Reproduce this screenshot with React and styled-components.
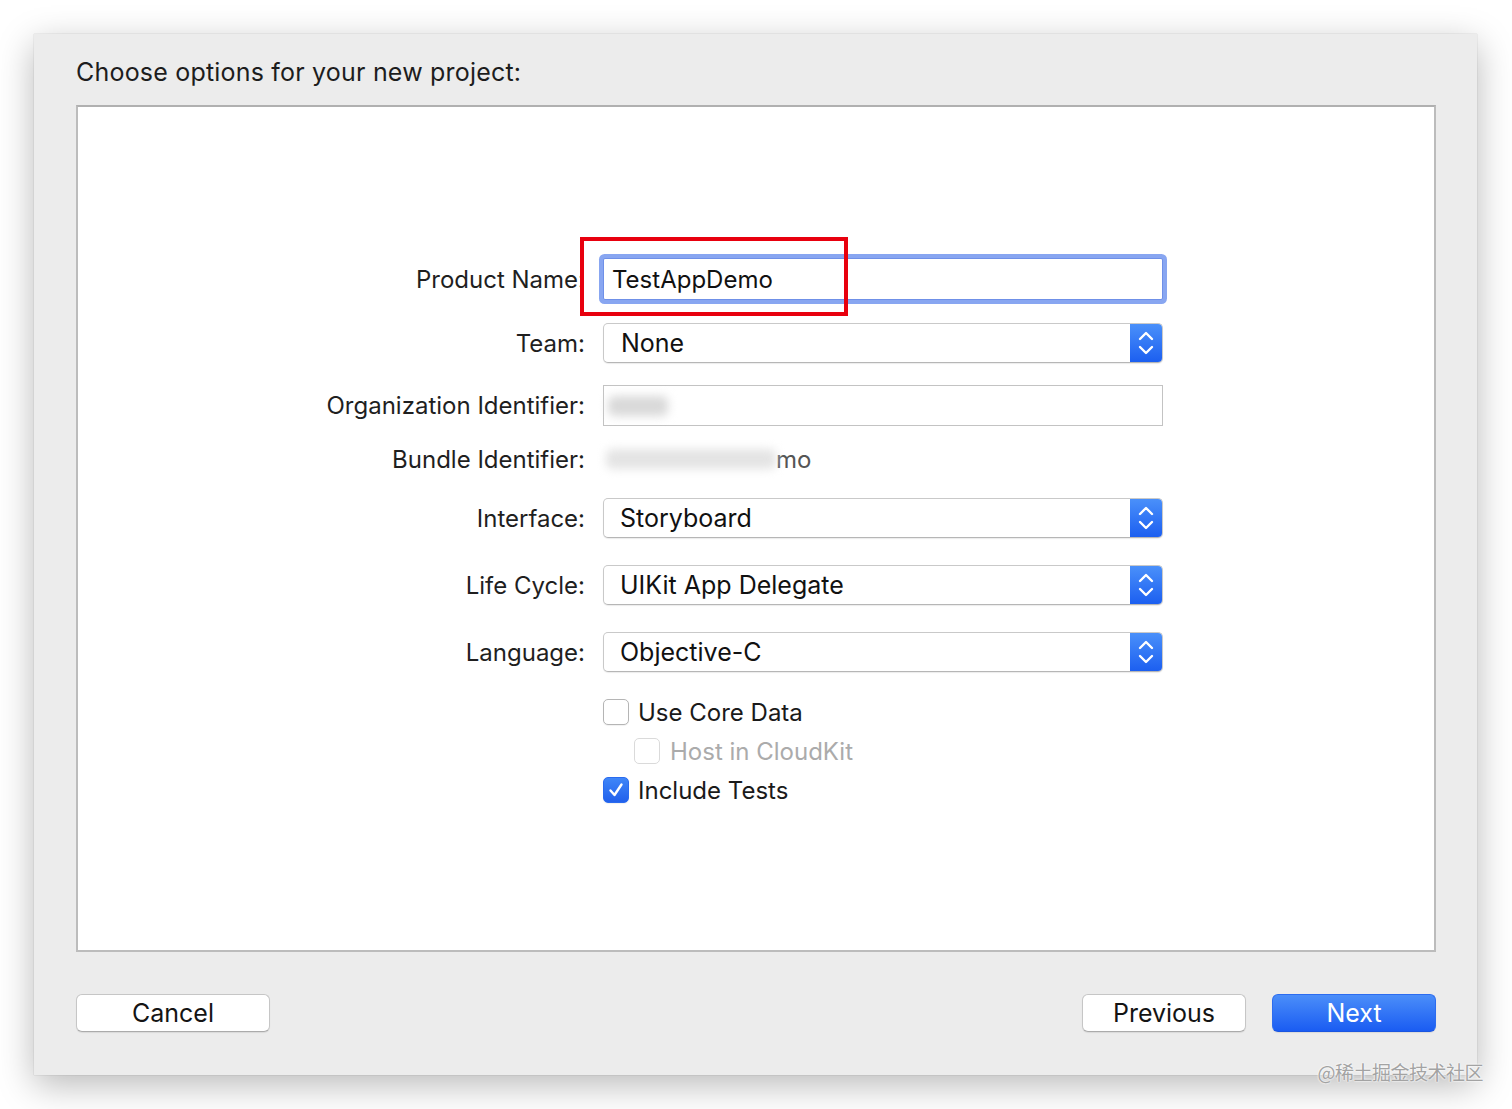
import React from "react";
import styled, { createGlobalStyle } from "styled-components";

const Global = createGlobalStyle`
  html, body { margin: 0; padding: 0; background: #ffffff; }
  body { font-family: Inter, "Noto Sans", "Liberation Sans", sans-serif; -webkit-font-smoothing: antialiased; }
  #root { width: 1512px; height: 1109px; position: relative; overflow: hidden; }
`;

const Page = styled.div`
  width: 1512px;
  height: 1109px;
  padding: 34px 0 0 34px;
  box-sizing: border-box;
  position: relative;
`;

const Window = styled.div`
  width: 1443px;
  height: 1041px;
  box-sizing: border-box;
  background: #ececec;
  box-shadow: 0 10px 34px rgba(0, 0, 0, 0.28), 0 0 1px rgba(0, 0, 0, 0.25);
  padding: 22px 41px 43px 42px;
  display: flex;
  flex-direction: column;
`;

const Title = styled.div`
  font-size: 25px;
  line-height: 32px;
  color: #1d1d1d;
  margin-bottom: 17px;
  letter-spacing: 0.2px;
`;

const ContentBox = styled.div`
  height: 847px;
  box-sizing: border-box;
  background: #ffffff;
  border: 2px solid #bcbcbc;
  border-top-color: #b0b0b0;
  padding-top: 147px;
`;

const Form = styled.div`
  display: flex;
  flex-direction: column;
`;

const Row = styled.div`
  display: grid;
  grid-template-columns: 507px 560px;
  column-gap: 18px;
  align-items: center;
  height: ${(p) => p.$h}px;
  margin-top: ${(p) => p.$mt || 0}px;
  position: relative;
`;

const Label = styled.div`
  text-align: right;
  font-size: 24px;
  color: #1f1f1f;
  white-space: nowrap;
`;

const TextField = styled.div`
  height: 42px;
  box-sizing: border-box;
  border: 1px solid #6f90e8;
  border-radius: 2px;
  box-shadow: 0 0 0 4px #88a6f1;
  background: #fff;
  display: flex;
  align-items: center;
  padding-left: 8px;
  font-size: 24px;
  color: #111;
`;

const PlainField = styled.div`
  height: 41px;
  box-sizing: border-box;
  border: 1px solid #c3c3c3;
  background: #fff;
  display: flex;
  align-items: center;
  padding-left: 4px;
`;

const Blur = styled.span`
  display: inline-block;
  width: ${(p) => p.$w}px;
  height: ${(p) => p.$h}px;
  background: ${(p) => p.$c};
  filter: blur(5px);
  border-radius: 6px;
`;

const BundleValue = styled.div`
  display: flex;
  align-items: center;
  font-size: 24px;
  color: #555;
  padding-left: 3px;
`;

const Popup = styled.div`
  height: 40px;
  box-sizing: border-box;
  border: 1px solid #c9c9c9;
  border-bottom-color: #b6b6b6;
  border-radius: 5px;
  background: #fff;
  box-shadow: 0 1px 1px rgba(0, 0, 0, 0.08);
  display: flex;
  align-items: stretch;
  overflow: hidden;
`;

const PopupText = styled.div`
  flex: 1;
  display: flex;
  align-items: center;
  padding-left: ${(p) => p.$pl ?? 16}px;
  font-size: 25px;
  color: #111;
`;

const Stepper = styled.div`
  width: 32px;
  background: linear-gradient(#4a90fa, #1c5ff0);
  display: flex;
  align-items: center;
  justify-content: center;
`;

const CheckRow = styled.div`
  display: flex;
  align-items: center;
  height: 26px;
  padding-left: ${(p) => p.$indent}px;
`;

const Box = styled.div`
  width: 26px;
  height: 26px;
  box-sizing: border-box;
  border-radius: 5px;
  border: 1px solid ${(p) => (p.$checked ? "#2a6bef" : p.$disabled ? "#dadada" : "#b5b5b5")};
  background: ${(p) => (p.$checked ? "linear-gradient(#3f86f8, #2160ec)" : "#fff")};
  box-shadow: ${(p) => (p.$disabled ? "none" : "0 1px 1px rgba(0,0,0,0.06)")};
  display: flex;
  align-items: center;
  justify-content: center;
  margin-right: ${(p) => p.$mr}px;
`;

const CheckLabel = styled.span`
  font-size: 24px;
  color: ${(p) => (p.$disabled ? "#ababab" : "#1a1a1a")};
`;

const Annotation = styled.div`
  position: absolute;
  left: 502px;
  top: -17px;
  width: 268px;
  height: 79px;
  box-sizing: border-box;
  border: 4px solid #e8000e;
  pointer-events: none;
`;

const Footer = styled.div`
  margin-top: 42px;
  display: flex;
  justify-content: space-between;
  align-items: center;
`;

const ButtonGroup = styled.div`
  display: flex;
  gap: 26px;
`;

const Button = styled.div`
  width: ${(p) => p.$w}px;
  height: 38px;
  box-sizing: border-box;
  border-radius: 6px;
  display: flex;
  align-items: center;
  justify-content: center;
  font-size: 25px;
  color: ${(p) => (p.$primary ? "#fff" : "#141414")};
  background: ${(p) => (p.$primary ? "linear-gradient(#4b8ef9, #1a5cf2)" : "#fff")};
  border: 1px solid ${(p) => (p.$primary ? "#2c6cf0" : "#c6c6c6")};
  border-bottom-color: ${(p) => (p.$primary ? "#1a55e0" : "#ababab")};
  box-shadow: 0 1px 1px rgba(0, 0, 0, 0.08);
`;

const Watermark = styled.div`
  position: absolute;
  right: 29px;
  top: 1058px;
  font-family: "Noto Sans CJK SC", "Noto Sans", sans-serif;
  font-size: 19px;
  color: #a3a3a3;
  text-shadow: 0 0 2px #fff, 0 0 2px #fff;
  letter-spacing: -0.5px;
`;

const Chevrons = () => (
  <svg width="18" height="30" viewBox="0 0 18 30">
    <path d="M3 11 L9 5 L15 11" fill="none" stroke="#fff" strokeWidth="2.4" strokeLinecap="round" strokeLinejoin="round" />
    <path d="M3 19 L9 25 L15 19" fill="none" stroke="#fff" strokeWidth="2.4" strokeLinecap="round" strokeLinejoin="round" />
  </svg>
);

const Check = () => (
  <svg width="18" height="18" viewBox="0 0 18 18">
    <path d="M3.5 9.5 L7.5 14 L14.5 3.5" fill="none" stroke="#fff" strokeWidth="2.4" strokeLinecap="round" strokeLinejoin="round" />
  </svg>
);

const PopupRow = ({ label, value, mt, pl }) => (
  <Row $h={40} $mt={mt}>
    <Label>{label}</Label>
    <Popup>
      <PopupText $pl={pl}>{value}</PopupText>
      <Stepper>
        <Chevrons />
      </Stepper>
    </Popup>
  </Row>
);

export default function App() {
  return (
    <Page>
      <Global />
      <Window>
        <Title>Choose options for your new project:</Title>
        <ContentBox>
          <Form>
            <Row $h={50}>
              <Label>Product Name:</Label>
              <TextField>TestAppDemo</TextField>
              <Annotation />
            </Row>
            <PopupRow label="Team:" value="None" mt={19} pl={17} />
            <Row $h={41} $mt={22}>
              <Label>Organization Identifier:</Label>
              <PlainField>
                <Blur $w={60} $h={20} $c="#d9d9d9" />
              </PlainField>
            </Row>
            <Row $h={40} $mt={13}>
              <Label>Bundle Identifier:</Label>
              <BundleValue>
                <Blur $w={170} $h={20} $c="#e4e4e4" />
                <span>mo</span>
              </BundleValue>
            </Row>
            <PopupRow label="Interface:" value="Storyboard" mt={19} />
            <PopupRow label="Life Cycle:" value="UIKit App Delegate" mt={27} />
            <PopupRow label="Language:" value="Objective-C" mt={27} />
            <Row $h={26} $mt={27}>
              <span />
              <CheckRow $indent={0}>
                <Box $mr={9} />
                <CheckLabel>Use Core Data</CheckLabel>
              </CheckRow>
            </Row>
            <Row $h={26} $mt={13}>
              <span />
              <CheckRow $indent={31}>
                <Box $disabled $mr={10} />
                <CheckLabel $disabled>Host in CloudKit</CheckLabel>
              </CheckRow>
            </Row>
            <Row $h={26} $mt={13}>
              <span />
              <CheckRow $indent={0}>
                <Box $checked $mr={9}>
                  <Check />
                </Box>
                <CheckLabel>Include Tests</CheckLabel>
              </CheckRow>
            </Row>
          </Form>
        </ContentBox>
        <Footer>
          <Button $w={194}>Cancel</Button>
          <ButtonGroup>
            <Button $w={164}>Previous</Button>
            <Button $w={164} $primary>Next</Button>
          </ButtonGroup>
        </Footer>
      </Window>
      <Watermark>@稀土掘金技术社区</Watermark>
    </Page>
  );
}
